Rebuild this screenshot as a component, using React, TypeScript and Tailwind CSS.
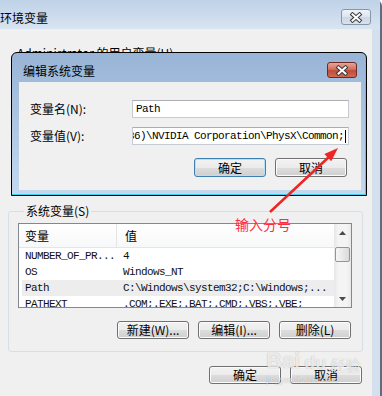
import React from 'react'

const cjk = "font-['Noto_Sans_CJK_SC','Noto_Sans',sans-serif]"
const mono = "font-['Liberation_Mono','Noto_Sans_CJK_SC',monospace] text-[11px] tracking-[-0.6px]"

const btnBase =
  'flex items-center justify-center rounded-[3px] border bg-[linear-gradient(to_bottom,#f2f2f2_0%,#ebebeb_50%,#dddddd_51%,#cfcfcf_100%)] leading-none'

interface ButtonProps {
  label: string
  focused?: boolean
  className?: string
}

function WinButton({ label, focused = false, className = '' }: ButtonProps) {
  const ring = focused
    ? 'border-[#3c7fb1] shadow-[inset_0_0_0_1px_#b4e1f8]'
    : 'border-[#707070] shadow-[inset_0_0_0_1px_#fbfbfb]'
  return <div className={`${btnBase} ${ring} ${className}`}>{label}</div>
}

function CloseGlyph() {
  return (
    <svg width="14" height="11" viewBox="0 0 14 11">
      <path d="M3.5 2.5 L10.5 8.5 M10.5 2.5 L3.5 8.5" stroke="#3a3a3a" strokeWidth="4" strokeLinecap="square" fill="none" />
      <path d="M3.5 2.5 L10.5 8.5 M10.5 2.5 L3.5 8.5" stroke="#ffffff" strokeWidth="2" strokeLinecap="square" fill="none" />
    </svg>
  )
}

function ScrollArrow({ down = false }: { down?: boolean }) {
  return (
    <div className="h-[17px] flex items-center justify-center shrink-0">
      <svg width="7" height="4" viewBox="0 0 7 4">
        <path d={down ? 'M0 0 L7 0 L3.5 4 Z' : 'M0 4 L7 4 L3.5 0 Z'} fill="#4a4a4a" />
      </svg>
    </div>
  )
}

const rows = [
  { name: 'NUMBER_OF_PR...', value: '4' },
  { name: 'OS', value: 'Windows_NT' },
  { name: 'Path', value: 'C:\\Windows\\system32;C:\\Windows;...', selected: true },
  { name: 'PATHEXT', value: '.COM;.EXE;.BAT;.CMD;.VBS;.VBE;' },
]

function VariableList() {
  return (
    <div className="h-[85px] border border-[#828790] bg-white flex">
      <div className="flex-1 flex flex-col overflow-hidden">
        <div className="h-[24px] shrink-0 flex border-b border-[#e5e5e5] bg-gradient-to-b from-white to-[#f7f8f9]">
          <div className="w-[98px] pl-[6px] flex items-center border-r border-[#e5e5e5]">变量</div>
          <div className="pl-[8px] flex items-center">值</div>
        </div>
        {rows.map(row => (
          <div
            key={row.name}
            className={`h-[16px] shrink-0 ml-[3px] flex items-center whitespace-nowrap ${row.selected ? 'bg-[#ededed]' : ''}`}
          >
            <div className={`w-[101px] pl-[3px] text-[#111] ${mono}`}>{row.name}</div>
            <div className={`text-[#111] ${mono}`}>{row.value}</div>
          </div>
        ))}
      </div>
      <div className="w-[17px] flex flex-col bg-[linear-gradient(to_right,#e6e6e6,#f4f4f4_25%,#f4f4f4_75%,#e8e8e8)]">
        <ScrollArrow />
        <div className="mt-[6px] mx-[1px] h-[15px] border border-[#959595] rounded-[2px] bg-[linear-gradient(to_right,#f6f6f6,#e9e9e9_50%,#d9d9d9)]" />
        <div className="flex-1" />
        <ScrollArrow down />
      </div>
    </div>
  )
}

function EditDialog() {
  return (
    <div className="absolute left-[11px] top-[52px] w-[356px] h-[144px] border border-black rounded-t-[6px] flex flex-col bg-gradient-to-b from-[#98b4d6] to-[#c4d9ef] shadow-[inset_-1px_-1px_0_#3fd2ee]">
      <div className="h-[29px] shrink-0 flex justify-between">
        <div className="pl-[11px] pt-[11px] leading-[14px]">编辑系统变量</div>
        <div className="mt-[9px] mr-[9px] w-[30px] h-[16px] rounded-[3px] border border-[#6e2a22] flex items-center justify-center bg-[linear-gradient(to_bottom,#e6a596_0%,#d27060_45%,#c04a38_55%,#d06a50_100%)]">
          <CloseGlyph />
        </div>
      </div>
      <div className="h-[108px] ml-[7px] mr-[5px] bg-[#f0f0f0] pl-[11px] pr-[12px] pt-[18px] flex flex-col">
        <div className="flex items-center h-[18px]">
          <div className="w-[102px]">变量名(N):</div>
          <div className="flex-1 h-full border border-[#c6cad2] border-t-[#abadb3] bg-white flex items-center pl-[3px]">
            <span className={mono}>Path</span>
          </div>
        </div>
        <div className="flex items-center h-[18px] mt-[9px]">
          <div className="w-[102px]">变量值(V):</div>
          <div className="flex-1 h-full border border-[#c6cad2] border-t-[#abadb3] bg-white flex items-center justify-end overflow-hidden pr-[2px] whitespace-nowrap">
            <span className={mono}>(x86)\NVIDIA Corporation\PhysX\Common;</span>
            <span className="w-px h-[13px] bg-black ml-[1px] shrink-0" />
          </div>
        </div>
        <div className="flex justify-end gap-[9px] mt-[13px] pr-[2px]">
          <WinButton label="确定" focused className="w-[72px] h-[19px]" />
          <WinButton label="取消" className="w-[72px] h-[19px]" />
        </div>
      </div>
    </div>
  )
}

export default function App() {
  return (
    <div className={`relative w-[382px] h-[396px] overflow-hidden bg-white text-[12px] text-black ${cjk}`}>
      <div className="h-full flex flex-col border-r-2 border-[#5e6d80] rounded-tr-[6px] bg-[#d4e0ed]">
        <div className="h-[29px] shrink-0 flex justify-between bg-gradient-to-b from-[#bfd2e7] to-[#d8e4f1]">
          <div className="pt-[11px] leading-[14px]">环境变量</div>
          <div className="mt-[9px] mr-[9px] w-[30px] h-[16px] rounded-[3px] border border-[#8695a8] flex items-center justify-center bg-[linear-gradient(to_bottom,#eef3f9_0%,#dbe4ef_50%,#cbd7e5_51%,#d8e2ee_100%)]">
            <CloseGlyph />
          </div>
        </div>
        <div className="flex-1 mr-[8px] bg-[#f0f0f0] flex flex-col">
          <div className="h-[175px] shrink-0 pt-[17px] pl-[17px] leading-[14px]">
            Administrator 的用户变量(U)
          </div>
          <fieldset className="ml-[8px] mr-[9px] border border-[#d5dfe5] rounded-[3px] pl-[9px] pr-[10px] pt-[5px] pb-[12px]">
            <legend className="ml-[6px] px-[2px] leading-[14px]">系统变量(S)</legend>
            <VariableList />
            <div className="flex justify-end gap-[9px] mt-[13px] pr-[1px]">
              <WinButton label="新建(W)..." className="w-[72px] h-[18px]" />
              <WinButton label="编辑(I)..." className="w-[72px] h-[18px]" />
              <WinButton label="删除(L)" className="w-[72px] h-[18px]" />
            </div>
          </fieldset>
          <div className="flex justify-end gap-[9px] mt-[14px] pr-[10px]">
            <WinButton label="确定" className="w-[72px] h-[18px]" />
            <WinButton label="取消" className="w-[72px] h-[18px]" />
          </div>
        </div>
      </div>

      <EditDialog />

      {/* annotation */}
      <svg className="absolute inset-0 pointer-events-none" width="382" height="396" viewBox="0 0 382 396">
        <line x1="270" y1="212" x2="330" y2="156" stroke="#f02424" strokeWidth="2.5" />
        <path d="M338 148 L331.2 161.2 L324.4 154 Z" fill="#f02424" />
      </svg>
      <div className="absolute left-[235px] top-[216px] text-[14px] leading-[16px] text-[#ff2d3c]">输入分号</div>

      <div className="absolute left-[266px] top-[350px] pointer-events-none text-white/75 [text-shadow:0_0_1px_rgba(0,0,0,0.3)] font-['Liberation_Sans',sans-serif]">
        <div className="flex items-end leading-none">
          <span className="text-[22px] font-bold">Bai</span>
          <span className="text-[18px] font-bold ml-[4px]">du</span>
          <span className={`text-[15px] ml-[4px] ${cjk}`}>经验</span>
        </div>
        <div className="text-[9px] leading-[10px] mt-[3px]">jingyan.baidu.com</div>
      </div>
    </div>
  )
}
